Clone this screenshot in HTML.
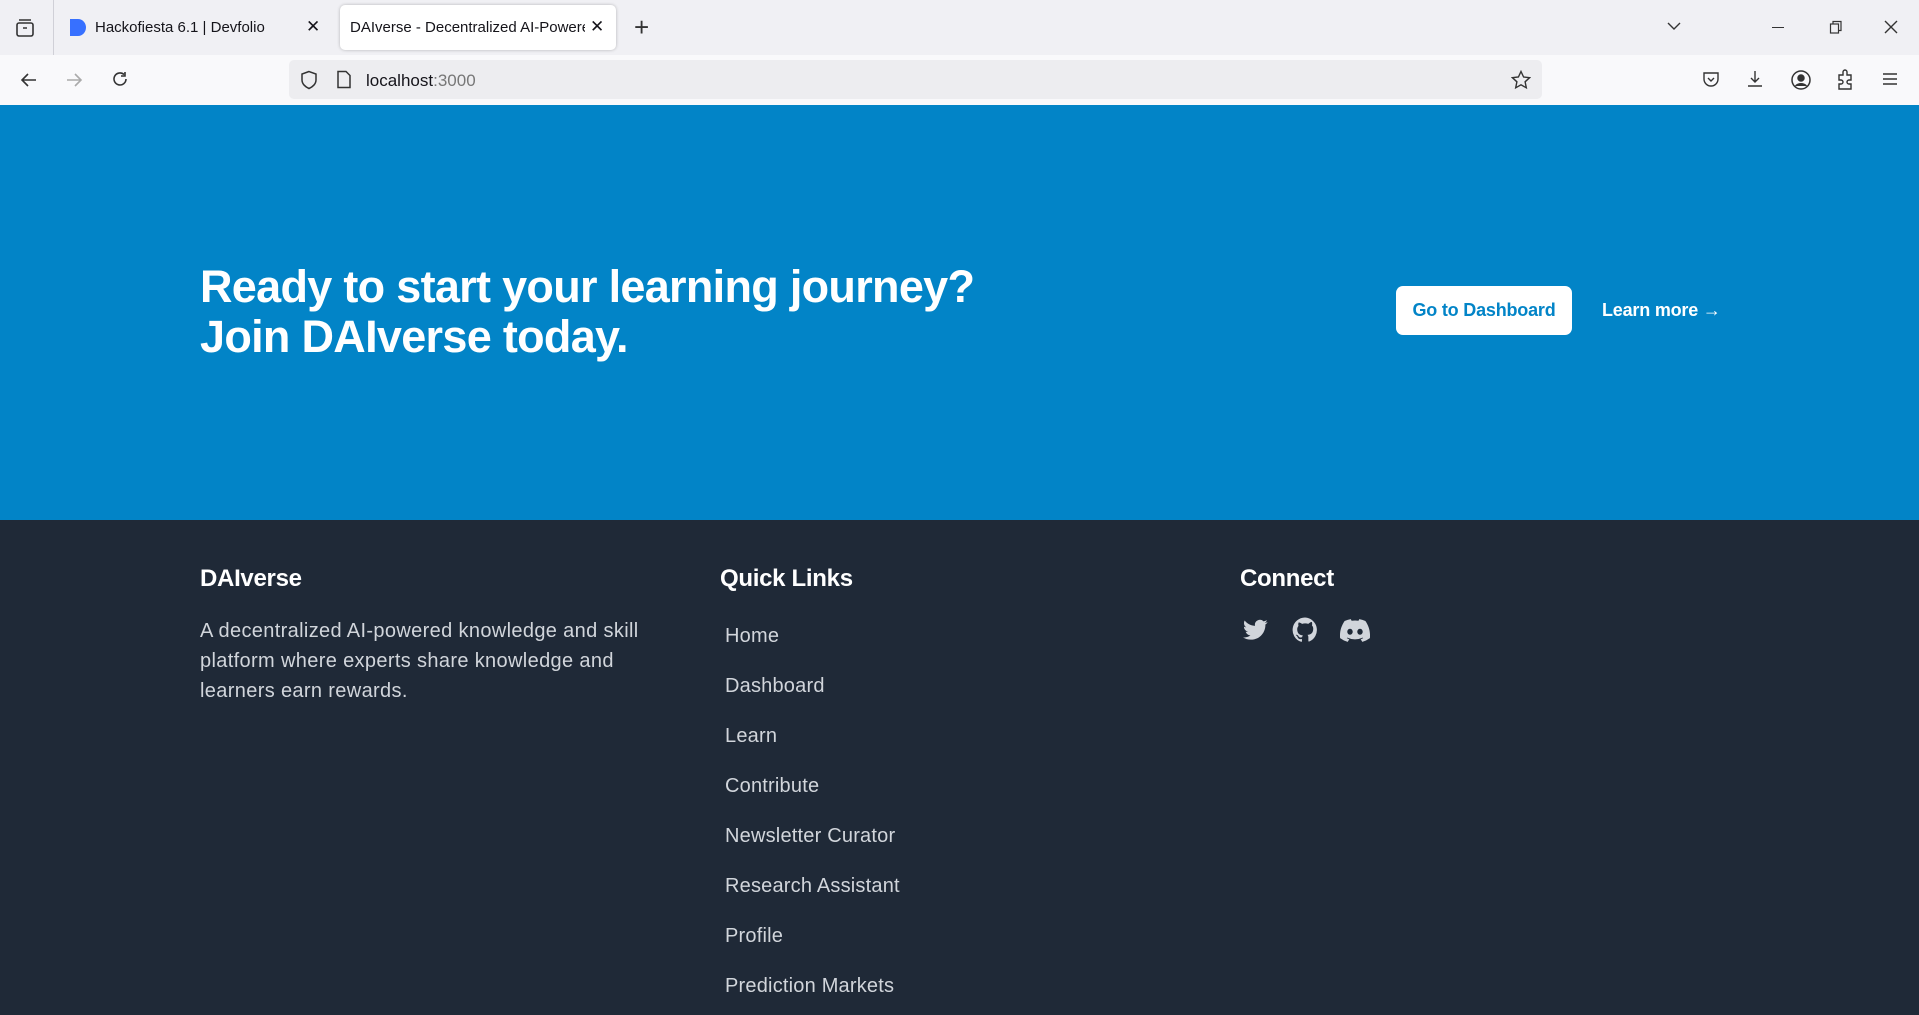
<!DOCTYPE html>
<html><head><meta charset="utf-8"><style>
*{margin:0;padding:0;box-sizing:border-box}
body{width:1919px;height:1015px;overflow:hidden;font-family:"Liberation Sans",sans-serif;background:#1f2937;position:relative}
.a{position:absolute;white-space:nowrap}
#tabs{left:0;top:0;width:1919px;height:55px;background:#f0f0f4}
#nav{left:0;top:55px;width:1919px;height:50px;background:#f9f9fb}
#hero{left:0;top:105px;width:1919px;height:415px;background:#0284c7}
.t{font-size:15px;color:#15141a}
</style></head><body>
<div class="a" id="tabs"></div>
<div class="a" id="nav"></div>
<div class="a" style="left:53px;top:0;width:1px;height:55px;background:#d0d0d7"></div>
<svg class="a" style="left:14px;top:17px" width="22" height="22" viewBox="0 0 22 22" fill="none" stroke="#333" stroke-width="1.6"><rect x="3" y="6" width="16" height="13" rx="2"/><path d="M5 3h12M9 11h4"/></svg>
<svg class="a" style="left:69px;top:18px" width="18" height="19" viewBox="0 0 18 19"><path d="M1 1h8a8 8.5 0 0 1 0 17H1z" fill="#3770ff"/></svg>
<div class="a t" style="left:95px;top:19px">Hackofiesta 6.1 | Devfolio</div>
<div class="a t" style="left:306px;top:17px;font-size:17px">✕</div>
<div class="a" style="left:340px;top:5px;width:276px;height:45px;background:#fff;border-radius:5px;box-shadow:0 0 3px rgba(0,0,0,.25)"></div>
<div class="a t" style="left:350px;top:19px;width:235px;overflow:hidden">DAIverse - Decentralized AI-Powered</div>
<div class="a t" style="left:590px;top:17px;font-size:17px">✕</div>
<div class="a" style="left:634px;top:12px;font-size:26px;color:#333;font-weight:300">+</div>
<svg class="a" style="left:1667px;top:21px" width="14" height="10" viewBox="0 0 14 10" fill="none" stroke="#333" stroke-width="1.4"><path d="M1 2l6 6 6-6"/></svg>
<div class="a" style="left:1772px;top:27px;width:12px;height:1px;background:#333"></div>
<svg class="a" style="left:1829px;top:20px" width="14" height="14" viewBox="0 0 14 14" fill="none" stroke="#333" stroke-width="1.2"><rect x="1.5" y="4" width="8" height="9"/><path d="M4 4V1.5h8v9h-2.5"/></svg>
<svg class="a" style="left:1884px;top:20px" width="14" height="14" viewBox="0 0 14 14" stroke="#333" stroke-width="1.4"><path d="M1 1l12 12M13 1L1 13"/></svg>
<svg class="a" style="left:19px;top:70px" width="20" height="20" viewBox="0 0 20 20" fill="none" stroke="#333" stroke-width="1.6"><path d="M17 10H3M9 4l-6 6 6 6"/></svg>
<svg class="a" style="left:64px;top:70px" width="20" height="20" viewBox="0 0 20 20" fill="none" stroke="#aaa" stroke-width="1.6"><path d="M3 10h14M11 4l6 6-6 6"/></svg>
<svg class="a" style="left:110px;top:70px" width="20" height="20" viewBox="0 0 20 20" fill="none" stroke="#333" stroke-width="1.6"><path d="M16 9a6 6 0 1 1-2-4.5M15 2v4h-4"/></svg>
<div class="a" style="left:289px;top:60px;width:1253px;height:39px;background:#ededf0;border-radius:5px"></div>
<svg class="a" style="left:300px;top:70px" width="18" height="20" viewBox="0 0 18 20" fill="none" stroke="#333" stroke-width="1.5"><path d="M9 1.5L2 4v6c0 4 3.5 7 7 8.5 3.5-1.5 7-4.5 7-8.5V4z"/></svg>
<svg class="a" style="left:336px;top:70px" width="16" height="19" viewBox="0 0 16 19" fill="none" stroke="#333" stroke-width="1.5"><path d="M2 1.5h8l4 4V17.5H2z"/></svg>
<div class="a" style="left:366px;top:71px;font-size:17px;color:#15141a">localhost<span style="color:#777">:3000</span></div>
<svg class="a" style="left:1511px;top:70px" width="20" height="20" viewBox="0 0 20 20" fill="none" stroke="#333" stroke-width="1.4"><path d="M10 1.5l2.6 5.5 6 .7-4.5 4.1 1.2 6-5.3-3-5.3 3 1.2-6L1.4 7.7l6-.7z"/></svg>
<svg class="a" style="left:1701px;top:70px" width="20" height="20" viewBox="0 0 20 20" fill="none" stroke="#333" stroke-width="1.4"><path d="M3 3h14v6a7 7 0 0 1-14 0z"/><path d="M7 8l3 3 3-3"/></svg>
<svg class="a" style="left:1745px;top:69px" width="20" height="20" viewBox="0 0 20 20" fill="none" stroke="#333" stroke-width="1.4"><path d="M10 2v11M6 9l4 4 4-4M3 17h14"/></svg>
<svg class="a" style="left:1790px;top:69px" width="22" height="22" viewBox="0 0 22 22" fill="none" stroke="#333" stroke-width="1.5"><circle cx="11" cy="11" r="9"/><circle cx="11" cy="9" r="3" fill="#333"/><path d="M5.5 17c3-3 8-3 11 0" fill="#333"/></svg>
<svg class="a" style="left:1836px;top:69px" width="20" height="22" viewBox="0 0 20 22" fill="none" stroke="#333" stroke-width="1.4"><path d="M3 6h4V3a2 2 0 0 1 4 0v3h4v5h-2a2 2 0 0 0 0 4h2v5H3v-5h2a2 2 0 0 0 0-4H3z"/></svg>
<svg class="a" style="left:1882px;top:71px" width="16" height="16" viewBox="0 0 16 16" stroke="#333" stroke-width="1.4"><path d="M1 3h14M1 8h14M1 13h14"/></svg>
<div class="a" id="hero"></div>
<div class="a" style="left:200px;top:262px;font-size:45px;line-height:50px;font-weight:bold;color:#fff;letter-spacing:-0.7px">Ready to start your learning journey?<br>Join DAIverse today.</div>
<div class="a" style="left:1396px;top:286px;width:176px;height:49px;background:#fff;border-radius:7px;color:#0284c7;font-weight:bold;font-size:18px;line-height:49px;text-align:center;letter-spacing:-.2px">Go to Dashboard</div>
<div class="a" style="left:1602px;top:300px;color:#fff;font-weight:bold;font-size:18px;letter-spacing:-.2px">Learn more →</div>
<div class="a" style="left:200px;top:565px;font-size:24px;font-weight:bold;color:#fff;letter-spacing:-.3px">DAIverse</div>
<div class="a" style="left:720px;top:565px;font-size:24px;font-weight:bold;color:#fff;letter-spacing:-.3px">Quick Links</div>
<div class="a" style="left:1240px;top:565px;font-size:24px;font-weight:bold;color:#fff;letter-spacing:-.3px">Connect</div>
<div class="a" style="left:200px;top:616px;font-size:20px;line-height:30px;color:#d1d5db;white-space:normal;width:470px;letter-spacing:.35px">A decentralized AI-powered knowledge and skill platform where experts share knowledge and learners earn rewards.</div>
<div class="a" style="left:725px;top:611px;font-size:20px;line-height:50px;color:#d1d5db;letter-spacing:.2px">Home<br>Dashboard<br>Learn<br>Contribute<br>Newsletter Curator<br>Research Assistant<br>Profile<br>Prediction Markets</div>
<svg class="a" style="left:1243px;top:619px" width="25" height="22" viewBox="0 0 24 20" fill="#d1d5db"><path d="M23.6 2.4c-.9.4-1.8.6-2.8.8 1-.6 1.8-1.5 2.1-2.7-.9.6-2 1-3.1 1.2A4.9 4.9 0 0 0 11.5 6C7.4 5.8 3.9 3.8 1.6.9c-1.3 2.3-.6 5 1.5 6.500-.8 0-1.6-.3-2.2-.6 0 2.4 1.7 4.400 3.900 4.800-.7.2-1.500.2-2.200.1.6 2 2.400 3.400 4.600 3.400A9.900 9.900 0 0 1 0 17.100 14 14 0 0 0 7.500 19.300c9.100 0 14-7.500 14-14v-.6c1-.7 1.800-1.500 2.100-2.300z"/></svg>
<svg class="a" style="left:1292px;top:617px" width="26" height="26" viewBox="0 0 24 24" fill="#d1d5db"><path d="M12 .5a11.5 11.5 0 0 0-3.6 22.4c.6.1.8-.3.8-.6v-2c-3.2.7-3.900-1.500-3.900-1.500-.5-1.300-1.300-1.700-1.300-1.700-1-.7.1-.7.1-.7 1.200.1 1.800 1.200 1.800 1.200 1 1.800 2.800 1.300 3.500 1 .1-.8.4-1.300.7-1.600-2.600-.3-5.300-1.300-5.300-5.700 0-1.300.5-2.300 1.200-3.100-.1-.3-.5-1.500.1-3.100 0 0 1-.3 3.200 1.200a11 11 0 0 1 5.800 0C17.300 4.300 18.300 4.600 18.300 4.600c.6 1.600.2 2.800.1 3.100.8.8 1.200 1.800 1.200 3.100 0 4.400-2.700 5.400-5.300 5.700.4.400.8 1.100.8 2.200v3.300c0 .3.2.7.8.6A11.500 11.500 0 0 0 12 .5z"/></svg>
<svg class="a" style="left:1340px;top:619px" width="30" height="23" viewBox="0 0 30 23" fill="#d1d5db"><path d="M25.4 2A24.700 24.700 0 0 0 19.300.1l-.8 1.600a23 23 0 0 0-6.900 0L10.800.1A24.600 24.600 0 0 0 4.600 2C.700 7.800-.4 13.500.1 19.100a24.900 24.900 0 0 0 7.600 3.800l1.600-2.600c-.9-.3-1.700-.7-2.500-1.200l.6-.5a17.700 17.700 0 0 0 15.200 0l.6.5c-.8.500-1.600.9-2.500 1.200l1.600 2.600a24.800 24.800 0 0 0 7.600-3.800c.6-6.500-1.100-12.200-4.500-17.100zM10 15.700c-1.500 0-2.700-1.400-2.700-3s1.200-3 2.700-3 2.700 1.400 2.700 3-1.200 3-2.700 3zm10 0c-1.500 0-2.700-1.400-2.700-3s1.200-3 2.700-3 2.700 1.400 2.700 3-1.200 3-2.700 3z"/></svg>
</body></html>
